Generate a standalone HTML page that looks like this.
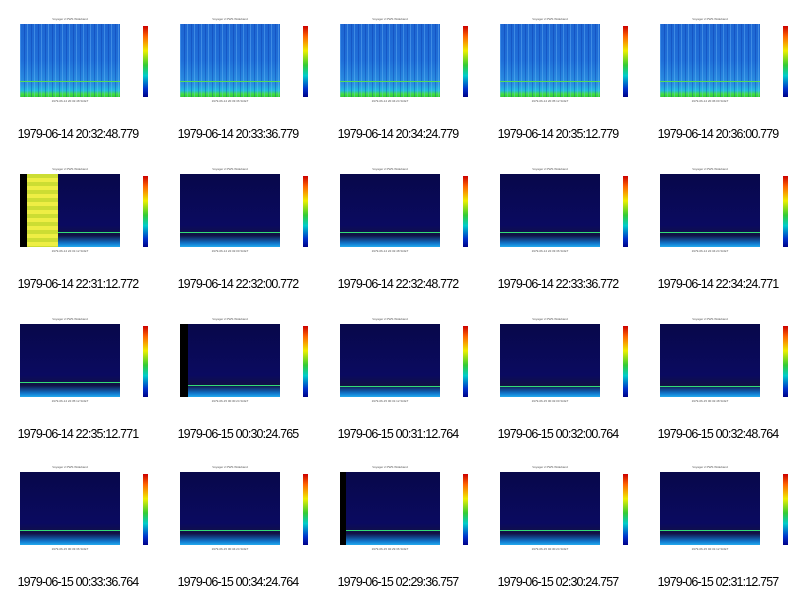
<!DOCTYPE html>
<html><head><meta charset="utf-8"><style>
body{margin:0;width:800px;height:596px;background:#fff;position:relative;overflow:hidden;font-family:"Liberation Sans",sans-serif}
.c{position:absolute;width:160px;height:150px}
.t{position:absolute;left:20px;top:17px;width:100px;text-align:center;font-size:3px;color:#555}
.p{position:absolute;left:20px;top:24px;width:100px;height:73px;overflow:hidden}
.a{background:repeating-linear-gradient(90deg,rgba(120,200,255,.35) 0 1px,transparent 1px 4px,rgba(0,40,160,.3) 4px 5px,transparent 5px 7px),linear-gradient(to top,#3c3 0,#4d4 4%,#2bd 9%,#2a8fe0 18%,#1f6fd8 50%,#1e66d2 100%)}
.b{background:linear-gradient(to top,#2ae 0,#17c 5%,#114 16%,#0a0a60 30%,#08084a 100%)}
.g{position:absolute;left:0;width:100%;height:1px;top:58px;background:#3d7}
.k{position:absolute;top:0;height:100%;background:#000}
.y{position:absolute;top:0;height:100%;background:repeating-linear-gradient(to bottom,#cd3 0 4px,#ee4 4px 8px);}
.x{position:absolute;left:20px;top:99px;width:100px;font-size:3px;color:#555;text-align:center;line-height:4px}
.cb{position:absolute;left:143px;top:26px;width:5px;height:71px;background:linear-gradient(to bottom,#c00,#f60 15%,#ee0 35%,#3c3 55%,#0cc 70%,#03c 88%,#008)}
.l{position:absolute;left:17px;top:24px;width:3px;height:73px;border-right:1px solid #bbb}
.cap{position:absolute;left:-2px;top:127px;width:160px;text-align:center;font-size:12.5px;letter-spacing:-0.85px;color:#000}
</style></head><body>
<!-- row 1 -->
<div class="c" style="left:0;top:0"><div class="t">Voyager 2 PWS Wideband</div><div class="l"></div><div class="p a"><div class="g" style="top:57px;background:#5d5"></div></div><div class="x">1979-06-14 20:32:48 SCET</div><div class="cb"></div><div class="cap">1979-06-14 20:32:48.779</div></div>
<div class="c" style="left:160px;top:0"><div class="t">Voyager 2 PWS Wideband</div><div class="l"></div><div class="p a"><div class="g" style="top:57px;background:#5d5"></div></div><div class="x">1979-06-14 20:33:36 SCET</div><div class="cb"></div><div class="cap">1979-06-14 20:33:36.779</div></div>
<div class="c" style="left:320px;top:0"><div class="t">Voyager 2 PWS Wideband</div><div class="l"></div><div class="p a"><div class="g" style="top:57px;background:#5d5"></div></div><div class="x">1979-06-14 20:34:24 SCET</div><div class="cb"></div><div class="cap">1979-06-14 20:34:24.779</div></div>
<div class="c" style="left:480px;top:0"><div class="t">Voyager 2 PWS Wideband</div><div class="l"></div><div class="p a"><div class="g" style="top:57px;background:#5d5"></div></div><div class="x">1979-06-14 20:35:12 SCET</div><div class="cb"></div><div class="cap">1979-06-14 20:35:12.779</div></div>
<div class="c" style="left:640px;top:0"><div class="t">Voyager 2 PWS Wideband</div><div class="l"></div><div class="p a"><div class="g" style="top:57px;background:#5d5"></div></div><div class="x">1979-06-14 20:36:00 SCET</div><div class="cb"></div><div class="cap">1979-06-14 20:36:00.779</div></div>
<!-- row 2 -->
<div class="c" style="left:0;top:150px"><div class="t">Voyager 2 PWS Wideband</div><div class="l"></div><div class="p b"><div class="g"></div><div class="k" style="left:0;width:7px"></div><div class="y" style="left:7px;width:31px"></div></div><div class="x">1979-06-14 22:31:12 SCET</div><div class="cb"></div><div class="cap">1979-06-14 22:31:12.772</div></div>
<div class="c" style="left:160px;top:150px"><div class="t">Voyager 2 PWS Wideband</div><div class="l"></div><div class="p b"><div class="g"></div></div><div class="x">1979-06-14 22:32:00 SCET</div><div class="cb"></div><div class="cap">1979-06-14 22:32:00.772</div></div>
<div class="c" style="left:320px;top:150px"><div class="t">Voyager 2 PWS Wideband</div><div class="l"></div><div class="p b"><div class="g"></div></div><div class="x">1979-06-14 22:32:48 SCET</div><div class="cb"></div><div class="cap">1979-06-14 22:32:48.772</div></div>
<div class="c" style="left:480px;top:150px"><div class="t">Voyager 2 PWS Wideband</div><div class="l"></div><div class="p b"><div class="g"></div></div><div class="x">1979-06-14 22:33:36 SCET</div><div class="cb"></div><div class="cap">1979-06-14 22:33:36.772</div></div>
<div class="c" style="left:640px;top:150px"><div class="t">Voyager 2 PWS Wideband</div><div class="l"></div><div class="p b"><div class="g"></div></div><div class="x">1979-06-14 22:34:24 SCET</div><div class="cb"></div><div class="cap">1979-06-14 22:34:24.771</div></div>
<!-- row 3 -->
<div class="c" style="left:0;top:300px"><div class="t">Voyager 2 PWS Wideband</div><div class="l"></div><div class="p b"><div class="g"></div></div><div class="x">1979-06-14 22:35:12 SCET</div><div class="cb"></div><div class="cap">1979-06-14 22:35:12.771</div></div>
<div class="c" style="left:160px;top:300px"><div class="t">Voyager 2 PWS Wideband</div><div class="l"></div><div class="p b"><div class="g" style="top:61px"></div><div class="k" style="left:0;width:8px"></div></div><div class="x">1979-06-15 00:30:24 SCET</div><div class="cb"></div><div class="cap">1979-06-15 00:30:24.765</div></div>
<div class="c" style="left:320px;top:300px"><div class="t">Voyager 2 PWS Wideband</div><div class="l"></div><div class="p b"><div class="g" style="top:62px"></div></div><div class="x">1979-06-15 00:31:12 SCET</div><div class="cb"></div><div class="cap">1979-06-15 00:31:12.764</div></div>
<div class="c" style="left:480px;top:300px"><div class="t">Voyager 2 PWS Wideband</div><div class="l"></div><div class="p b"><div class="g" style="top:62px"></div></div><div class="x">1979-06-15 00:32:00 SCET</div><div class="cb"></div><div class="cap">1979-06-15 00:32:00.764</div></div>
<div class="c" style="left:640px;top:300px"><div class="t">Voyager 2 PWS Wideband</div><div class="l"></div><div class="p b"><div class="g" style="top:62px"></div></div><div class="x">1979-06-15 00:32:48 SCET</div><div class="cb"></div><div class="cap">1979-06-15 00:32:48.764</div></div>
<!-- row 4 -->
<div class="c" style="left:0;top:448px"><div class="t">Voyager 2 PWS Wideband</div><div class="l"></div><div class="p b"><div class="g"></div></div><div class="x">1979-06-15 00:33:36 SCET</div><div class="cb"></div><div class="cap">1979-06-15 00:33:36.764</div></div>
<div class="c" style="left:160px;top:448px"><div class="t">Voyager 2 PWS Wideband</div><div class="l"></div><div class="p b"><div class="g"></div></div><div class="x">1979-06-15 00:34:24 SCET</div><div class="cb"></div><div class="cap">1979-06-15 00:34:24.764</div></div>
<div class="c" style="left:320px;top:448px"><div class="t">Voyager 2 PWS Wideband</div><div class="l"></div><div class="p b"><div class="g"></div><div class="k" style="left:0;width:6px"></div></div><div class="x">1979-06-15 02:29:36 SCET</div><div class="cb"></div><div class="cap">1979-06-15 02:29:36.757</div></div>
<div class="c" style="left:480px;top:448px"><div class="t">Voyager 2 PWS Wideband</div><div class="l"></div><div class="p b"><div class="g"></div></div><div class="x">1979-06-15 02:30:24 SCET</div><div class="cb"></div><div class="cap">1979-06-15 02:30:24.757</div></div>
<div class="c" style="left:640px;top:448px"><div class="t">Voyager 2 PWS Wideband</div><div class="l"></div><div class="p b"><div class="g"></div></div><div class="x">1979-06-15 02:31:12 SCET</div><div class="cb"></div><div class="cap">1979-06-15 02:31:12.757</div></div>
</body></html>
